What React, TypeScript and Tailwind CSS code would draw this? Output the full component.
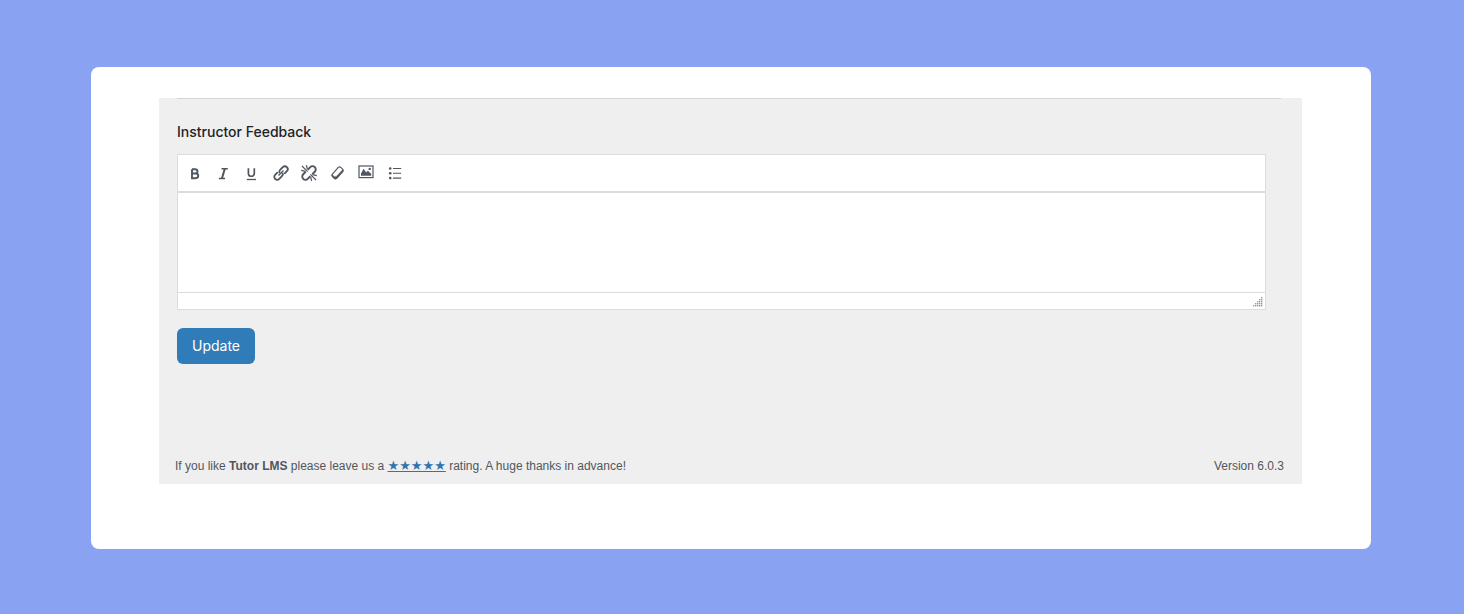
import { useState } from "react";
import type { ReactNode } from "react";

function Icon({ children }: { children: ReactNode }) {
  return (
    <svg
      viewBox="0 0 20 20"
      className="size-5"
      fill="none"
      stroke="currentColor"
      strokeWidth="2"
      aria-hidden="true"
    >
      {children}
    </svg>
  );
}

const tools: { label: string; icon: ReactNode }[] = [
  {
    label: "Bold",
    icon: (
      <Icon>
        <path d="M7 6.3H10.1C13.3 6.3 13.3 10.5 10.1 10.5H7M7 10.5H10.4C14.2 10.5 14.2 15.2 10.4 15.2H7V6.3Z" strokeWidth="1.9" />
      </Icon>
    ),
  },
  {
    label: "Italic",
    icon: (
      <Icon>
        <path d="M7.5 5.7H13.8M4.8 15.5H11" strokeWidth="1.5" />
        <path d="M10.8 5.7L7.9 15.5" />
      </Icon>
    ),
  },
  {
    label: "Underline",
    icon: (
      <Icon>
        <path d="M6.4 5.2V10.4C6.4 14.2 12.3 14.2 12.3 10.4V5.2" strokeWidth="1.7" />
        <path d="M4.8 16.5H13.9" strokeWidth="1.3" />
      </Icon>
    ),
  },
  {
    label: "Insert link",
    icon: (
      <Icon>
        <g transform="rotate(-45 10 10)" strokeWidth="1.8">
          <path d="M8.3 7.1H4.6A2.9 2.9 0 0 0 4.6 12.9H8.4A2.9 2.9 0 0 0 11.2 10.8" />
          <path d="M11.7 12.9H15.4A2.9 2.9 0 0 0 15.4 7.1H11.6A2.9 2.9 0 0 0 8.8 9.2" />
          <path d="M6.5 10H13.5" strokeWidth="1.3" />
        </g>
      </Icon>
    ),
  },
  {
    label: "Remove link",
    icon: (
      <Icon>
        <g transform="rotate(-45 10 10)" strokeWidth="1.9">
          <path d="M8.6 6.8H5A3.2 3.2 0 0 0 5 13.2H8.6" />
          <path d="M11.4 13.2H15A3.2 3.2 0 0 0 15 6.8H11.4" />
        </g>
        <path
          d="M8.6 8.6L3 3M8.4 6.4L7.4 2.2M6.4 8.4L2.2 7.4M11.4 11.4L17 17M11.6 13.6L12.6 17.8M13.6 11.6L17.8 12.6"
          strokeWidth="1.2"
        />
      </Icon>
    ),
  },
  {
    label: "Clear formatting",
    icon: (
      <Icon>
        <path
          d="M10.3 4.4Q11.6 3.3 12.8 4.4L14.6 6.1Q15.6 7.2 14.7 8.5L8.8 15.1Q7.6 16.2 6.4 15.2L4.5 13.4Q3.5 12.3 4.4 11Z"
          strokeWidth="1.2"
        />
        <path
          d="M4.1 11.4Q6.2 14.4 8.3 13.4L14.9 6.4Q15.8 7.6 15 8.8L8.9 15.6Q7.6 16.8 6.2 15.6L4.2 13.7Q3.2 12.6 4.1 11.4Z"
          fill="currentColor"
          strokeWidth="0.4"
        />
      </Icon>
    ),
  },
  {
    label: "Add media",
    icon: (
      <Icon>
        <rect x="3" y="3" width="14" height="11.6" strokeWidth="1.2" />
        <path d="M5 12.8V10.5L7.6 5.8L10.2 9.6L11.8 7.8L15.2 10.7V12.8Z" fill="currentColor" stroke="none" />
        <circle cx="13.7" cy="5.9" r="1.2" fill="currentColor" stroke="none" />
      </Icon>
    ),
  },
  {
    label: "Bulleted list",
    icon: (
      <Icon>
        <g fill="currentColor" stroke="none">
          <circle cx="5.2" cy="5.5" r="1.3" />
          <circle cx="5.2" cy="10.3" r="1.3" />
          <circle cx="5.2" cy="15.1" r="1.3" />
        </g>
        <path d="M8 5.5H16.2M8 10.3H16.2M8 15.1H16.2" strokeWidth="1.1" />
      </Icon>
    ),
  },
];

function Toolbar() {
  return (
    <div
      role="toolbar"
      aria-label="Formatting"
      className="flex h-9 w-60 items-center justify-between pr-[9px] pl-[3px]"
    >
      {tools.map((tool) => (
        <button
          key={tool.label}
          type="button"
          aria-label={tool.label}
          className="flex size-7 items-center justify-center text-[#50575e]"
        >
          {tool.icon}
        </button>
      ))}
    </div>
  );
}

function ResizeGrip() {
  return (
    <svg viewBox="0 0 10 10" className="size-2.5 text-[#999999]" fill="currentColor" aria-hidden="true">
      {[1, 2, 3, 4, 5].map((column) =>
        Array.from({ length: column }, (_, row) => (
          <rect key={`${column}-${row}`} x={column * 2 - 2} y={8 - row * 2} width="1.4" height="1.4" />
        )),
      )}
    </svg>
  );
}

export default function App() {
  const [feedback, setFeedback] = useState("");

  return (
    <div className="min-h-screen bg-[#8aa2f2] pt-[67px] pr-[93px] pb-[65px] pl-[91px] font-['Inter',sans-serif]">
      <main className="rounded-lg bg-white pt-[31px] pr-[69px] pb-[65px] pl-[68px]">
        <div className="bg-[#efefef] px-[18px] pb-2">
          <hr className="mr-[3px] border-[#d5d5d7]" />
          <form onSubmit={(event) => event.preventDefault()}>
            <label htmlFor="feedback" className="block pt-[23px] text-sm leading-5 font-medium text-[#1d2327]">
              Instructor Feedback
            </label>
            <div className="mt-3 mr-[18px] border border-[#dcdcde] bg-white">
              <Toolbar />
              <textarea
                id="feedback"
                value={feedback}
                onChange={(event) => setFeedback(event.target.value)}
                className="block h-[102px] w-full resize-none border-t-2 border-b border-[#dcdcde] p-2 text-sm outline-none"
              />
              <div className="flex h-4 items-end justify-end pr-0.5 pb-0.5">
                <ResizeGrip />
              </div>
            </div>
            <button type="submit" className="mt-[18px] h-9 rounded-md bg-[#2f7cb8] px-[15px] text-sm text-white">
              Update
            </button>
          </form>
          <footer className="-ml-0.5 mt-[92px] flex h-5 items-center justify-between font-['Liberation_Sans',sans-serif] text-xs leading-5 text-[#50575e]">
            <p>
              If you like <strong className="font-semibold">Tutor LMS</strong> please leave us a{" "}
              <a
                href="#rating"
                aria-label="Five stars"
                className="font-['DejaVu_Sans',sans-serif] text-[13px] leading-4 text-[#2e74b0] underline"
              >
                ★★★★★
              </a>{" "}
              rating. A huge thanks in advance!
            </p>
            <p>Version 6.0.3</p>
          </footer>
        </div>
      </main>
    </div>
  );
}
